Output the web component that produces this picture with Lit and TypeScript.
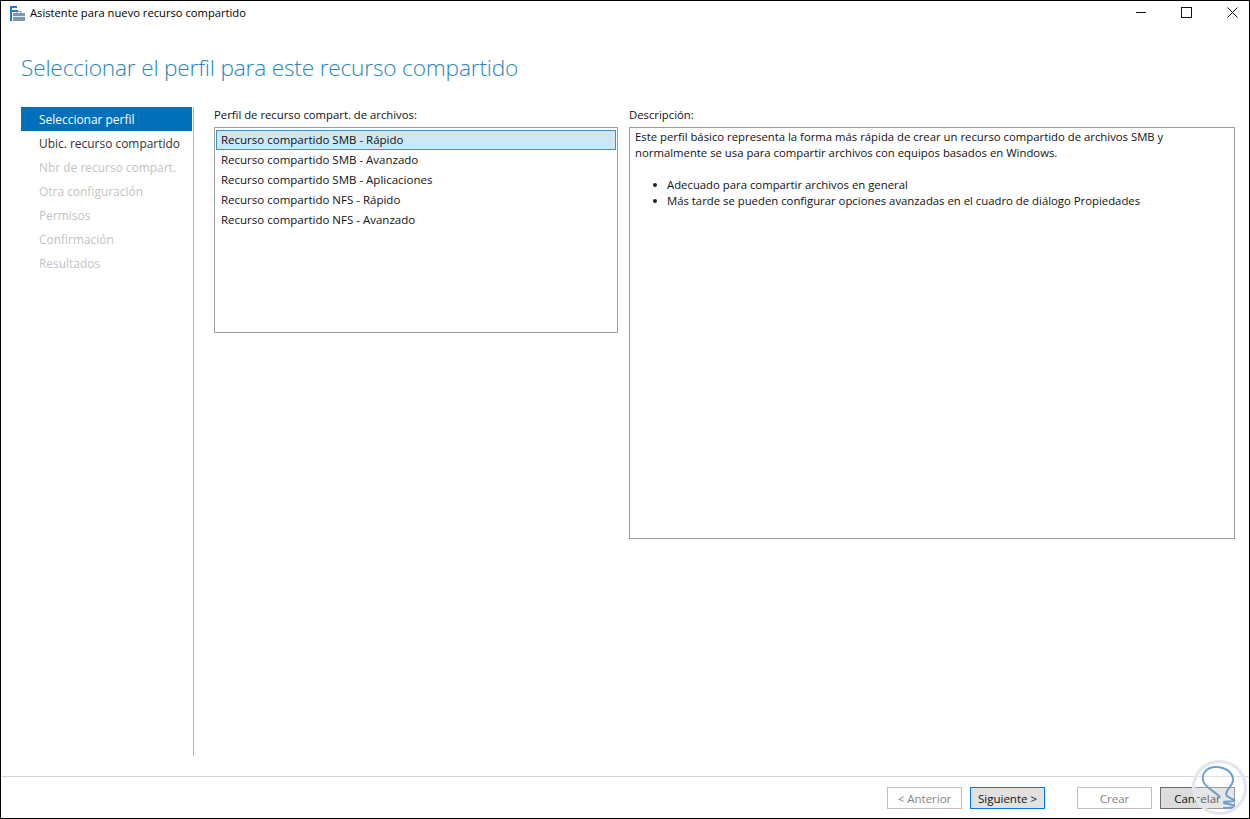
import { LitElement, html, css } from "lit";
import { customElement } from "lit/decorators.js";

const steps = [
  ["Seleccionar perfil", "active"],
  ["Ubic. recurso compartido", "normal"],
  ["Nbr de recurso compart.", "off"],
  ["Otra configuración", "off"],
  ["Permisos", "off"],
  ["Confirmación", "off"],
  ["Resultados", "off"],
];
const profiles = [
  "Recurso compartido SMB - Rápido",
  "Recurso compartido SMB - Avanzado",
  "Recurso compartido SMB - Aplicaciones",
  "Recurso compartido NFS - Rápido",
  "Recurso compartido NFS - Avanzado",
];

@customElement("app-root")
export class AppRoot extends LitElement {
  static styles = css`
    :host {
      display: flex;
      flex-direction: column;
      box-sizing: border-box;
      width: 1250px;
      height: 819px;
      position: relative;
      overflow: hidden;
      background: #fff;
      border: 1px solid #000;
      font-family: "Open Sans", "Noto Sans", sans-serif;
      font-size: 11.5px;
      color: #111;
    }
    .titlebar {
      display: flex;
      align-items: center;
      height: 24px;
      flex: none;
      padding-left: 9px;
    }
    .titlebar .app {
      width: 15px;
      height: 15px;
      margin-right: 5px;
    }
    .titlebar .name {
      flex: 1;
      font-size: 11.2px;
      color: #000;
      padding-bottom: 2px;
    }
    .controls {
      display: flex;
      gap: 35px;
      padding: 0 11px 1px 0;
    }
    .controls svg {
      display: block;
      width: 11px;
      height: 11px;
    }
    h1 {
      margin: 0;
      height: 82px;
      flex: none;
      padding: 26px 0 0 20px;
      box-sizing: border-box;
      font-weight: 300;
      font-family: "Open Sans", sans-serif;
      font-size: 22.7px;
      letter-spacing: -0.2px;
      line-height: 34px;
      color: #2a84bd;
    }
    .body {
      flex: 1;
      display: flex;
      min-height: 0;
      padding-left: 20px;
    }
    nav {
      width: 172px;
      flex: none;
      border-right: 1px solid #b4b4b4;
      height: 649px;
    }
    nav div {
      height: 24px;
      line-height: 25px;
      padding-left: 18px;
      width: 171px;
      box-sizing: border-box;
      font-size: 11.95px;
      white-space: nowrap;
    }
    nav .active {
      background: #0070bb;
      color: #fff;
    }
    nav .normal {
      color: #333;
    }
    nav .off {
      color: #c3c3c3;
    }
    .panels {
      display: flex;
      padding-left: 20px;
      gap: 11px;
    }
    .panel label {
      display: block;
      height: 20px;
      line-height: 16px;
      font-size: 11.3px;
    }
    .left {
      width: 404px;
    }
    .right {
      width: 606px;
    }
    .list {
      box-sizing: border-box;
      height: 206px;
      border: 1px solid #9e9e9e;
      padding: 2px 1px;
    }
    .list div {
      box-sizing: border-box;
      height: 20px;
      line-height: 18px;
      padding-left: 4px;
      border: 1px solid transparent;
      white-space: nowrap;
    }
    .list .sel {
      background: #cce8f6;
      border-color: #3e94c8;
    }
    .desc {
      box-sizing: border-box;
      height: 412px;
      border: 1px solid #9e9e9e;
      padding: 1px 5px;
      line-height: 16px;
      font-size: 11.33px;
    }
    .desc p {
      margin: 0 0 16px;
    }
    .desc ul {
      margin: 0;
      padding: 0 0 0 32px;
      list-style: none;
    }
    .desc li {
      position: relative;
    }
    .desc li::before {
      content: "";
      position: absolute;
      left: -14px;
      top: 6px;
      width: 4px;
      height: 4px;
      border-radius: 50%;
      background: #222;
    }
    footer {
      flex: none;
      box-sizing: border-box;
      height: 42px;
      border-top: 1px solid #d4d4d4;
      display: flex;
      justify-content: flex-end;
      padding: 10px 14px 0 0;
    }
    button {
      box-sizing: border-box;
      width: 75px;
      height: 22px;
      font: inherit;
      font-size: 11.5px;
      padding: 0;
      margin-left: 8px;
      background: #e1e1e1;
      border: 1px solid #adadad;
      color: #111;
    }
    button:disabled {
      background: #fff;
      border-color: #bfbfbf;
      color: #838383;
    }
    .default {
      border-color: #0078d7;
    }
    .cancel {
      border-color: #6e6e6e;
      background: #dcdcdc;
    }
    .gap {
      margin-left: 32px;
    }
    .mark {
      position: absolute;
      right: 0;
      bottom: 0;
      width: 60px;
      height: 60px;
      pointer-events: none;
    }
  `;

  render() {
    return html`
      <div class="titlebar">
        <svg class="app" viewBox="0 0 15 15">
          <path d="M0 0h7v2H2v2h6v2H2v9H0z" fill="#1f7fc4" />
          <rect x="3" y="7" width="12" height="8" fill="#7f97ad" />
          <path d="M7 7V5.500h4V7" fill="none" stroke="#7f97ad" />
          <rect x="3" y="10" width="12" height="1" fill="#e6ebf0" />
        </svg>
        <span class="name">Asistente para nuevo recurso compartido</span>
        <div class="controls">
          <svg viewBox="0 0 11 11"><path d="M1 5.500h10" stroke="#111" fill="none" /></svg>
          <svg viewBox="0 0 11 11"><rect x=".5" y=".5" width="10" height="10" stroke="#111" fill="none" /></svg>
          <svg viewBox="0 0 11 11"><path d="M.5.500l10 10M10.500.500l-10 10" stroke="#111" fill="none" /></svg>
        </div>
      </div>
      <h1>Seleccionar el perfil para este recurso compartido</h1>
      <div class="body">
        <nav>${steps.map(([t, c]) => html`<div class=${c}>${t}</div>`)}</nav>
        <div class="panels">
          <div class="panel left">
            <label>Perfil de recurso compart. de archivos:</label>
            <div class="list">
              ${profiles.map((p, i) => html`<div class=${i === 0 ? "sel" : ""}>${p}</div>`)}
            </div>
          </div>
          <div class="panel right">
            <label>Descripción:</label>
            <div class="desc">
              <p>Este perfil básico representa la forma más rápida de crear un recurso compartido de archivos SMB y<br />normalmente se usa para compartir archivos con equipos basados en Windows.</p>
              <ul>
                <li>Adecuado para compartir archivos en general</li>
                <li>Más tarde se pueden configurar opciones avanzadas en el cuadro de diálogo Propiedades</li>
              </ul>
            </div>
          </div>
        </div>
      </div>
      <footer>
        <button disabled>&lt; Anterior</button>
        <button class="default">Siguiente &gt;</button>
        <button class="gap" disabled>Crear</button>
        <button class="cancel">Cancelar</button>
      </footer>
      <svg class="mark" viewBox="0 0 60 60">
        <circle cx="30.500" cy="29.500" r="26" fill="rgba(255,255,255,.3)" stroke="#e3e6f0" stroke-width="3" />
        <path d="M31 39C25 33 19 31 15 25C11 17 17 9 27 9C37 9 44 15 44 22C44 28 38 30 37 36C37 39 42 40 45 42C46 44 36 43 35 44C34 46 44 46 45 48C45 50 38 50 34 50" fill="none" stroke="#6a9fd0" stroke-width="2" />
      </svg>
    `;
  }
}
